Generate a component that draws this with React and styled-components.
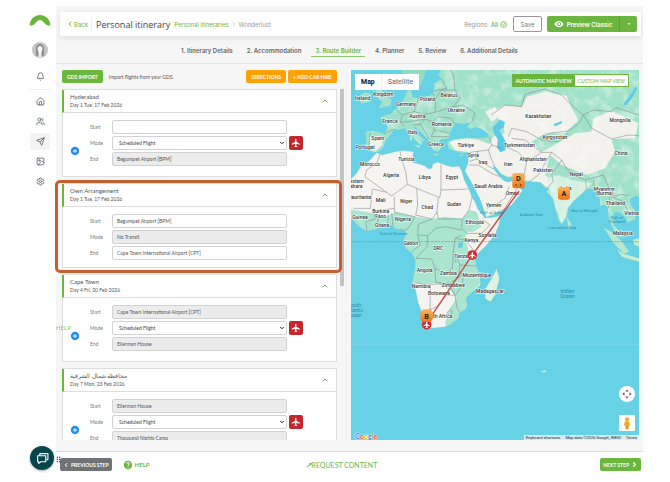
import React, { useState } from 'react';
import styled, { createGlobalStyle } from 'styled-components';
import {
 Bell,
 House,
 Users,
 Send,
 Image,
 Settings,
 ChevronLeft,
 ChevronRight,
 ChevronUp,
 ChevronDown,
} from 'lucide-react';
import {
 MdFlight,
 MdVisibility,
 MdAddCircle,
 MdHelp,
 MdArrowDropDown,
 MdDragIndicator,
} from 'react-icons/md';

const stops = [
 {
  id: 'hyderabad',
  title: 'Hyderabad',
  date: 'Day 1 Tue, 17 Feb 2026',
  start: '',
  mode: 'Scheduled Flight',
  end: 'Begumpet Airport [BPM]',
  lockEnd: true,
 },
 {
  id: 'own',
  title: 'Own Arrangement',
  date: 'Day 1 Tue, 17 Feb 2026',
  start: 'Begumpet Airport [BPM]',
  mode: 'No Transit',
  end: 'Cape Town International Airport [CPT]',
  noTransit: true,
 },
 {
  id: 'capetown',
  title: 'Cape Town',
  date: 'Day 4 Fri, 20 Feb 2026',
  start: 'Cape Town International Airport [CPT]',
  mode: 'Scheduled Flight',
  end: 'Ellerman House',
  lockStart: true,
  lockEnd: true,
 },
 {
  id: 'sharqiya',
  title: 'محافظة شمال الشرقية',
  date: 'Day 7 Mon, 23 Feb 2026',
  start: 'Ellerman House',
  mode: 'Scheduled Flight',
  end: 'Thousand Nights Camp',
  lockStart: true,
  lockEnd: true,
 },
];

const tabs = [
 '1. Itinerary Details',
 '2. Accommodation',
 '3. Route Builder',
 '4. Planner',
 '5. Review',
 '6. Additional Details',
];

const countries = [
 ['Ireland', 53, 105],
 ['Kingdom', 115, 92],
 ['Germany', 183, 122],
 ['Poland', 248, 107],
 ['Belarus', 312, 96],
 ['Ukraine', 334, 142],
 ['Austria', 217, 158],
 ['France', 135, 173],
 ['Romania', 290, 182],
 ['Italy', 203, 206],
 ['Spain', 98, 225],
 ['Portugal', 60, 252],
 ['Greece', 273, 242],
 ['Türkiye', 362, 246],
 ['Syria', 385, 277],
 ['Tunisia', 184, 287],
 ['Iraq', 414, 297],
 ['Morocco', 75, 304],
 ['Algeria', 138, 335],
 ['Libya', 239, 343],
 ['Egypt', 321, 343],
 ['Western', 29, 354],
 ['Sahara', 29, 369],
 ['Mauritania', 42, 403],
 ['Mali', 107, 411],
 ['Niger', 184, 414],
 ['Chad', 247, 432],
 ['Sudan', 327, 422],
 ['Saudi Arabia', 430, 369],
 ['Yemen', 446, 426],
 ['Burkina', 107, 444],
 ['Faso', 107, 459],
 ['Guinea', 45, 463],
 ['Ghana', 111, 485],
 ['Nigeria', 174, 469],
 ['Ethiopia', 389, 476],
 ['Somalia', 428, 516],
 ['Gabon', 197, 540],
 ['Kenya', 379, 532],
 ['DRC', 280, 555],
 ['Tanzania', 358, 580],
 ['Angola', 239, 622],
 ['Zambia', 310, 629],
 ['Mozambique', 396, 637],
 ['Namibia', 228, 670],
 ['Zimbabwe', 325, 667],
 ['Botswana', 282, 691],
 ['Madagascar', 435, 683],
 ['South Africa', 280, 758],
 ['Kazakhstan', 580, 158],
 ['Mongolia', 825, 172],
 ['Kyrgyzstan', 630, 222],
 ['Turkmenistan', 523, 245],
 ['China', 828, 271],
 ['Afghanistan', 564, 289],
 ['Iran', 490, 303],
 ['Pakistan', 594, 320],
 ['Nepal', 694, 333],
 ['India', 663, 374],
 ['Oman', 502, 391],
 ['Myanmar', 778, 377],
 ['(Burma)', 778, 391],
 ['Thailand', 811, 421],
 ['Vietnam', 866, 449],
 ['Malaysia', 833, 509],
];

const waters = [
 ['Arabian Sea', 558, 452],
 ['Bay of Bengal', 718, 442],
 ['Laccadive Sea', 652, 492],
 ['Gulf of Guinea', 145, 510],
 ['Gulf of', 815, 462],
 ['Thailand', 815, 474],
 ['Gulf of Aden', 440, 448],
];

const oceans = [
 ['Indian', 667, 683],
 ['Ocean', 667, 699],
 ['South', 29, 725],
 ['Atlantic', 29, 741],
 ['Ocean', 29, 757],
];

const africa =
 'M95 263 L112 270 L135 264 L165 257 L190 258 L206 261 L203 273 L210 283 L203 293 L222 297 L240 303 L250 312 L261 310 L264 296 L278 292 L300 300 L322 306 L342 304 L350 318 L358 345 L372 372 L381 398 L390 410 L398 432 L412 448 L418 459 L438 458 L466 453 L462 478 L450 508 L425 540 L402 562 L390 582 L392 603 L404 628 L406 660 L380 682 L361 699 L366 718 L362 732 L344 742 L340 758 L318 776 L298 786 L262 789 L240 786 L234 768 L232 745 L219 712 L213 680 L203 652 L210 615 L213 588 L203 566 L184 550 L174 530 L184 505 L175 492 L155 492 L135 478 L108 483 L90 493 L65 497 L45 486 L26 466 L10 455 L10 350 L35 325 L45 308 L70 290 Z';

const africaGreen =
 'M10 432 L60 440 L98 448 L130 452 L150 442 L210 455 L262 462 L300 455 L352 462 L372 435 L395 440 L420 470 L410 485 L385 500 L368 500 L360 520 L372 560 L390 582 L392 603 L404 628 L404 656 L380 682 L361 699 L366 718 L362 732 L344 742 L340 758 L318 776 L300 782 L305 755 L315 730 L335 700 L320 680 L292 660 L272 655 L216 655 L203 650 L210 615 L213 588 L203 566 L184 550 L174 530 L184 505 L175 492 L155 492 L135 478 L108 483 L90 493 L65 497 L45 486 L26 466 L10 455 Z';

const eurasia =
 'M62 200 L85 197 L118 206 L128 190 L124 172 L104 158 L122 150 L138 146 L152 132 L168 118 L178 100 L186 78 L198 72 L202 98 L222 100 L254 92 L268 78 L268 55 L290 42 L280 30 L290 10 L890 10 L890 398 L872 392 L854 403 L858 420 L872 440 L870 462 L848 472 L842 458 L826 444 L808 440 L802 455 L808 482 L826 500 L834 520 L818 512 L802 486 L792 462 L788 425 L776 418 L766 424 L764 400 L752 380 L738 372 L724 372 L704 392 L682 412 L668 430 L666 456 L650 476 L642 468 L632 435 L624 400 L604 380 L614 372 L598 366 L586 352 L552 350 L525 348 L508 342 L500 334 L488 338 L468 326 L452 305 L444 300 L446 312 L462 334 L474 346 L482 350 L492 352 L506 346 L514 362 L532 376 L518 398 L500 420 L474 436 L448 450 L424 456 L416 430 L404 400 L385 362 L366 328 L360 318 L369 298 L372 262 L350 264 L330 258 L312 252 L306 232 L330 222 L360 218 L392 220 L428 218 L432 208 L410 192 L392 186 L378 192 L366 186 L378 172 L352 178 L334 174 L324 186 L314 204 L310 222 L290 222 L282 228 L290 246 L278 260 L264 254 L256 238 L248 222 L232 206 L214 190 L206 184 L212 200 L228 216 L242 226 L232 228 L230 240 L220 234 L206 220 L190 204 L180 190 L160 194 L148 192 L136 210 L122 224 L116 246 L104 258 L84 262 L74 254 L60 252 L64 226 Z';

const beige = [
 'M440 140 L480 120 L530 125 L545 95 L600 80 L665 92 L680 130 L700 165 L660 205 L600 205 L560 230 L590 260 L620 245 L690 205 L740 200 L745 160 L800 138 L850 160 L880 175 L870 220 L800 222 L810 260 L780 310 L725 330 L650 300 L615 270 L600 330 L625 350 L608 368 L586 352 L508 342 L468 326 L440 296 L400 262 L430 245 L445 215 L480 205 L470 170 Z',
 'M312 230 L350 222 L400 224 L440 240 L445 300 L462 334 L492 352 L506 346 L532 376 L500 420 L424 456 L404 400 L360 318 L372 262 L330 256 Z',
 'M72 215 L112 212 L112 240 L92 258 L74 250 Z',
 'M420 140 L450 125 L470 150 L440 170 Z',
];

const borders = [
 // Africa
 'M105 268 L95 295 L65 315 L60 335 L125 382 L140 393 L187 358 L182 320 L172 290 L165 258',
 'M187 358 L215 370 L284 398 L288 375 L288 298 M288 375 L372 372 M215 370 L218 420 L212 450 L262 462 L276 440 L280 398',
 'M125 382 L82 372 L76 430 L25 430 M148 395 L148 430 L118 434 L98 452 L100 490 M148 430 L150 442 L210 455 L190 490 L178 496',
 'M82 430 L92 462 L62 470 L66 497 M130 448 L128 480 M140 444 L144 484 M276 440 L280 462 L352 462 L372 435 L381 398 M352 462 L350 490 L365 505 L410 505 L435 480 L415 465',
 'M262 462 L220 478 L218 510 L248 512 L272 490 L300 485 L350 495 M218 510 L226 540 L200 560 M248 512 L246 545 L213 580',
 'M213 580 L260 582 L270 610 L300 625 L322 610 L325 560 L330 520 L350 510 M330 520 L360 525 L390 560 M325 560 L345 600 L392 603',
 'M345 600 L340 640 L310 655 L272 652 L270 610 M205 654 L272 658 L310 655 L330 690 L302 692 L282 720 L255 735 L256 658 M256 730 L256 762 L236 765 M330 690 L336 730 L345 742 M340 640 L355 625 L352 660 L332 690 M306 742 L318 734 L322 744 L312 752 Z',
 // Europe
 'M118 206 L148 192 M75 204 L72 250 M152 132 L172 150 L166 172 L178 186 M166 172 L205 168 L240 162 L238 148 L208 140 L220 100 M172 150 L208 140 M238 148 L270 142 L272 100 L262 85',
 'M240 162 L262 170 L280 155 L318 160 L332 178 M262 170 L268 195 L312 204 M270 142 L325 125 L355 120 L390 145 L380 172 M272 100 L290 75 L330 75 L345 100 L325 125 M268 78 L305 70 L290 42',
 'M240 162 L226 178 L240 200 L252 222 M268 195 L258 215 L310 215 M226 178 L206 180 M330 75 L325 30 L318 15',
 // Middle East and central Asia
 'M432 215 L440 240 L430 255 L375 262 M398 258 L395 282 L372 290 M395 282 L420 298 L446 312 M372 300 L400 300 L440 325 L462 334 M430 255 L440 285 L448 302 M440 240 L470 250 M424 430 L450 420 L480 400 L492 365',
 'M438 150 L480 120 L530 125 L540 88 L600 72 L650 90 L690 130 L715 150 L700 178 L668 198 L612 205 L590 225 L545 200 L500 190 L490 215',
 'M482 245 L520 262 L545 290 L535 340 M545 290 L590 262 L620 262 L600 295 L580 330 L552 350 M620 262 L650 285 L620 330 L625 350 L605 370 M500 220 L540 225 L590 262 M590 225 L640 230 L668 205',
 'M715 150 L745 135 L800 140 L812 128 L850 140 L882 150 M715 150 L740 190 L800 222 L850 210 L882 212 M650 285 L665 312 L720 345 L775 330 L790 365 L800 395 L830 388 L850 392 M668 322 L710 342 M722 348 L724 372 M745 345 L750 375 M795 395 L790 430 M800 395 L835 410 L850 440',
];

const Route = () => {
 const [view, setView] = useState('Map');
 const [source, setSource] = useState('auto');

 return (
  <MapPanel>
   <MapSvg viewBox='18 15 864 1110' preserveAspectRatio='xMidYMid slice'>
    <defs>
     <linearGradient id='pin' x1='0' y1='0' x2='0' y2='1'>
      <stop offset='0' stopColor='#fdb45c' />
      <stop offset='1' stopColor='#ee7412' />
     </linearGradient>
     <clipPath id='asiaClip'>
      <path d={eurasia} />
     </clipPath>
     <filter id='relief' x='0' y='0' width='1' height='1'>
      <feTurbulence type='fractalNoise' baseFrequency='0.03' numOctaves='3' seed='4' />
      <feColorMatrix values='0 0 0 0 0.95  0 0 0 0 0.98  0 0 0 0 0.94  3 0 0 0 -1.3' />
     </filter>
    </defs>
    <rect x='0' y='0' width='900' height='1140' fill='#67d1e6' />
    <path d='M170 10 L176 40 L190 52 L205 42 L214 60 L228 58 L236 40 L246 10 Z' fill='#93dcc4' />
    <path d='M82 60 L100 52 L112 78 L140 105 L136 122 L100 130 L112 112 L98 100 L106 88 Z' fill='#a5e2cc' />
    <path d='M58 82 L78 86 L74 110 L48 116 L42 98 Z' fill='#a5e2cc' />
    <path d={eurasia} fill='#9fe1c9' />
    <g clipPath='url(#asiaClip)'>
     {beige.map((d) => (
      <path key={d} d={d} fill='#f3f1ec' />
     ))}
     <path d='M608 340 L640 330 L680 345 L740 355 L724 372 L682 412 L650 476 L620 400 Z' fill='#d4f0e0' />
     <rect x='30' y='10' width='860' height='500' filter='url(#relief)' opacity='0.4' />
    </g>
    <path d={africa} fill='#f6f4f1' />
    <path d={africaGreen} fill='#a9e5cf' />
    <path d='M395 440 L420 470 L466 453 L450 508 L402 562 L385 540 L368 510 L410 490 Z' fill='#f1f2ea' />
    <path d='M455 612 L463 640 L450 690 L436 710 L421 700 L420 672 L438 645 Z' fill='#dff2dd' />
    <path d='M664 456 L676 470 L680 484 L671 486 Z M776 488 L800 500 L830 528 L852 560 L836 566 L806 534 Z' fill='#b6e8cf' />
    <path d='M815 552 L835 566 L882 580 L882 590 L832 576 Z M864 524 L882 520 L882 545 L868 540 Z' fill='#c9ecc9' />
    <path d='M196 210 L202 212 L200 228 L194 226 Z M208 240 L226 240 L222 250 Z M264 266 L284 268 L268 272 Z M342 270 L356 266 L348 274 Z' fill='#b7e6cf' />
    <path d='M588 918 L602 916 L604 922 L592 922 Z' fill='#c9ecd8' />
    {/* inland water */}
    <path
     d='M444 186 L466 164 L480 172 L476 188 L462 194 L474 214 L486 238 L480 256 L466 262 L456 248 L458 222 L446 204 Z M625 178 L650 168 L652 174 L630 184 Z M835 118 L862 82 L872 64 L876 70 L866 92 L842 122 Z M340 535 L354 532 L352 548 L340 548 Z M328 565 L334 590 L330 592 Z'
     fill='#5ecbe4'
    />
    <path d={africa} fill='none' stroke='#9bcfc9' strokeWidth='1' />
    {borders.map((d) => (
     <path key={d} d={d} fill='none' stroke='#7c8584' strokeWidth='1.6' strokeLinejoin='round' />
    ))}
    <path d='M18 530 H882' stroke='#4d9fb2' strokeWidth='2' strokeDasharray='7 3' />
    <path d='M18 838 H882' stroke='#7fd9eb' strokeWidth='2' />

    <Country>
     {countries.map(([name, x, y]) => (
      <text key={name} x={x} y={y}>
       {name}
      </text>
     ))}
    </Country>
    <Water>
     {waters.map(([name, x, y]) => (
      <text key={name + y} x={x} y={y}>
       {name}
      </text>
     ))}
     {oceans.map(([name, x, y]) => (
      <text key={name + y} x={x} y={y} className='ocean'>
       {name}
      </text>
     ))}
    </Water>

    <path d='M522 378 L382 570 L256 758' fill='none' stroke='#c8484b' strokeWidth='4' />
    <path d='M516 372 L432 505' fill='none' stroke='#a07077' strokeWidth='2' />
    <Plane x={382} y={570} />
    <Plane x={245} y={779} />
    <Pin>
     <rect x='502' y='324' width='37' height='46' rx='8' />
     <circle cx='513' cy='360' r='2' className='dot' />
     <circle cx='527' cy='360' r='2' className='dot' />
     <text x='520' y='349'>D</text>
     <rect x='639' y='366' width='36' height='38' rx='7' />
     <text x='657' y='393'>A</text>
     <rect x='226' y='733' width='38' height='38' rx='14' />
     <text x='245' y='761'>B</text>
    </Pin>
   </MapSvg>

   <MapTypes>
    {['Map', 'Satellite'].map((name) => (
     <MapType key={name} $active={view === name} onClick={() => setView(name)}>
      {name}
     </MapType>
    ))}
   </MapTypes>
   <ViewSwitch>
    <ViewButton $active={source === 'auto'} onClick={() => setSource('auto')}>
     AUTOMATIC MAP VIEW
    </ViewButton>
    <ViewButton $active={source === 'custom'} onClick={() => setSource('custom')}>
     CUSTOM MAP VIEW
    </ViewButton>
   </ViewSwitch>
   <MapTools>
    <RoundTool aria-label='Map camera controls'>
     <svg viewBox='0 0 24 24' width='10' height='10' fill='#555'>
      <path d='M12 1 L16 6 H8 Z M12 23 L16 18 H8 Z M1 12 L6 8 V16 Z M23 12 L18 8 V16 Z' />
     </svg>
    </RoundTool>
    <SquareTool aria-label='Street View'>
     <svg viewBox='0 0 20 34' width='8' height='13'>
      <circle cx='10' cy='6' r='5.5' fill='#f2ac28' />
      <path d='M4 12 H16 L18 22 H15 L14 32 H6 L5 22 H2 Z' fill='#f2ac28' />
      <path d='M7 12 L10 16 L13 12 M10 22 V32' stroke='#b5791a' strokeWidth='1.5' fill='none' />
     </svg>
    </SquareTool>
   </MapTools>
   <GoogleMark aria-label='Google'>
    <span>G</span>
    <span>o</span>
    <span>o</span>
    <span>g</span>
    <span>l</span>
    <span>e</span>
   </GoogleMark>
   <Attribution>
    <span>Keyboard shortcuts</span>
    <span>Map data ©2026 Google, INEGI</span>
    <a href='#terms'>Terms</a>
   </Attribution>
  </MapPanel>
 );
};

const Plane = ({ x, y }) => (
 <g transform={`translate(${x} ${y})`}>
  <circle r='14.5' fill='#cf2a2f' />
  <path
   d='M0 -10 L2 -7 V-2 L10 3 V5 L2 3 V7 L4 9 V10 L0 9 L-4 10 V9 L-2 7 V3 L-10 5 V3 L-2 -2 V-7 Z'
   fill='#fff'
  />
 </g>
);

const StopCard = ({ stop }) => {
 return (
  <Card $marked={stop.noTransit}>
   <CardHead>
    <div>
     <h3>{stop.title}</h3>
     <p>{stop.date}</p>
    </div>
    <IconButton aria-label={`Collapse ${stop.title}`}>
     <ChevronUp size={8} strokeWidth={3} />
    </IconButton>
   </CardHead>
   <CardBody $tight={stop.noTransit}>
    <AddCell>
     {!stop.noTransit && (
      <AddButton aria-label='Add transit'>
       <MdAddCircle size={10} />
      </AddButton>
     )}
    </AddCell>
    <Fields>
     <Field>
      <label htmlFor={`${stop.id}-start`}>Start</label>
      <Input id={`${stop.id}-start`} defaultValue={stop.start} readOnly={stop.lockStart} />
     </Field>
     <Field>
      <label htmlFor={`${stop.id}-mode`}>Mode</label>
      {stop.noTransit ? (
       <Input id={`${stop.id}-mode`} defaultValue={stop.mode} readOnly />
      ) : (
       <SelectWrap>
        <Select id={`${stop.id}-mode`} defaultValue={stop.mode}>
         <option>{stop.mode}</option>
        </Select>
        <ChevronDown size={6} strokeWidth={4} />
       </SelectWrap>
      )}
      {!stop.noTransit && (
       <FlightButton aria-label='Flight details'>
        <MdFlight size={10} />
       </FlightButton>
      )}
     </Field>
     <Field>
      <label htmlFor={`${stop.id}-end`}>End</label>
      <Input id={`${stop.id}-end`} defaultValue={stop.end} readOnly={stop.lockEnd} />
     </Field>
    </Fields>
   </CardBody>
  </Card>
 );
};

export default function App() {
 const [active, setActive] = useState(2);

 return (
  <>
   <GlobalStyle />
   <Page>
    <Sidebar>
     <svg width='22' height='12' viewBox='0 0 22 12' aria-label='Logo'>
      <path
       d='M0.5 11.5 A10.5 10.5 0 0 1 21.5 11.5 C18 11.5 17 11 15 8.5 C12.5 5 9.5 5 7 8.5 C5 11 4 11.5 0.5 11.5 Z'
       fill='#6bb63f'
      />
     </svg>
     <Avatar viewBox='0 0 32 32'>
      <circle cx='16' cy='16' r='16' fill='#c4c4c4' />
      <path d='M8 27 V13 C8 1 24 1 24 13 V27 C20 30 12 30 8 27 Z' fill='#8b8b8b' />
      <path d='M11 13 C11 6 21 6 21 13 C21 18 19 21 16 21 C13 21 11 18 11 13 Z' fill='#f5f5f5' />
      <path d='M13 20 H19 V31 H13 Z' fill='#f0f0f0' />
     </Avatar>
     <NavLink href='#alerts' aria-label='Notifications'>
      <Bell size={9} />
     </NavLink>
     <Divider />
     <NavList>
      <NavLink href='#home' aria-label='Home'>
       <House size={9} />
      </NavLink>
      <NavLink href='#contacts' aria-label='Contacts'>
       <Users size={9} />
      </NavLink>
      <NavLink href='#itineraries' aria-label='Itineraries' $active>
       <Send size={9} />
      </NavLink>
      <NavLink href='#media' aria-label='Media'>
       <Image size={9} />
      </NavLink>
      <NavLink href='#settings' aria-label='Settings'>
       <Settings size={9} />
      </NavLink>
     </NavList>
    </Sidebar>

    <Main>
     <Header>
      <Back href='#back'>
       <ChevronLeft size={8} strokeWidth={3} />
       Back
      </Back>
      <h1>Personal itinerary</h1>
      <Crumbs>
       <a href='#itineraries'>Personal itineraries</a>
       <ChevronRight size={6} />
       <span>Wonderlust</span>
      </Crumbs>
      <Regions>
       Regions: <b>All</b>
       <svg width='7' height='7' viewBox='0 0 12 12' fill='none' stroke='#6bb63f' strokeWidth='1.4'>
        <circle cx='6' cy='6' r='5' />
        <path d='M4 6 L6 8 L8 4' />
       </svg>
      </Regions>
      <SaveButton>Save</SaveButton>
      <Preview>
       <button>
        <MdVisibility size={10} />
        Preview Classic
       </button>
       <button aria-label='More previews'>
        <MdArrowDropDown size={8} />
       </button>
      </Preview>
     </Header>

     <Tabs>
      {tabs.map((name, i) => (
       <Tab key={name} $active={active === i} onClick={() => setActive(i)}>
        {name}
       </Tab>
      ))}
     </Tabs>

     <Builder>
      <Column>
       <Toolbar>
        <Button $bg='#6bb63f'>GDS IMPORT</Button>
        <p>Import flights from your GDS.</p>
        <Button $bg='#fca207'>DIRECTIONS</Button>
        <Button $bg='#fca207'>+ ADD CAR HIRE</Button>
       </Toolbar>
       <Scroller>
        <List>
         {stops.map((stop) => (
          <StopCard key={stop.id} stop={stop} />
         ))}
        </List>
        <Scrollbar />
       </Scroller>
      </Column>
      <Route />
     </Builder>
    </Main>
    <Footer>
     <FooterStart>
      <StepButton $bg='#707375'>
       <ChevronLeft size={6} strokeWidth={4} />
       PREVIOUS STEP
      </StepButton>
      <FooterLink href='#help'>
       <MdHelp size={10} />
       HELP
      </FooterLink>
     </FooterStart>
     <Request href='#request'>
      <svg width='6' height='6' viewBox='0 0 12 12' stroke='#6bb63f' strokeWidth='2' fill='none'>
       <path d='M1 10 L10 4 M7 3 L11 3 L9 7' />
      </svg>
      REQUEST CONTENT
     </Request>
     <StepButton $bg='#6bb63f'>
      NEXT STEP
      <ChevronRight size={7} strokeWidth={4} />
     </StepButton>
    </Footer>
    <HelpTag href='#help'>HELP</HelpTag>
    <Grip>
     <MdDragIndicator size={9} />
    </Grip>
    <Chat aria-label='Open chat'>
     <svg width='13' height='13' viewBox='0 0 24 24' fill='none' stroke='#fff' strokeWidth='2' strokeLinejoin='round'>
      <path d='M7 7 V3 H22 V14 H19' />
      <path d='M3 7 H18 V18 H9 L5 21 V18 H3 Z' />
     </svg>
    </Chat>
   </Page>
  </>
 );
}

const GlobalStyle = createGlobalStyle`
 * {
  box-sizing: border-box;
 }
 body {
  margin: 0;
  background: #fff;
  color: #555;
  font-family: Lato, 'Liberation Sans', sans-serif;
  font-size: 5px;
 }
 h1, h3, p {
  margin: 0;
 }
 a {
  text-decoration: none;
 }
 button {
  font-family: inherit;
  border: none;
  padding: 0;
  cursor: pointer;
 }
 svg {
  flex-shrink: 0;
 }
`;

const Page = styled.div`
 display: grid;
 grid-template-columns: 56px minmax(0, 1fr);
 grid-template-rows: minmax(0, 1fr) 30px;
 height: 100vh;
 padding: 6px 27px 0 0;
`;

const Sidebar = styled.nav`
 display: flex;
 flex-direction: column;
 align-items: center;
 padding: 8px 6px 0 30px;
`;

const Avatar = styled.svg`
 width: 16px;
 height: 16px;
 margin: 16px 0 10px;
`;

const Divider = styled.hr`
 width: 100%;
 margin: 4px 0 3px;
 border: none;
 border-top: 1px solid #eee;
`;

const NavList = styled.div`
 display: flex;
 flex-direction: column;
 gap: 3px;
`;

const NavLink = styled.a`
 display: flex;
 align-items: center;
 justify-content: center;
 width: 20px;
 height: 17px;
 border-radius: 2px;
 color: #4f545c;
 background: ${({ $active }) => ($active ? '#f3f3f3' : 'transparent')};
`;

const Main = styled.main`
 display: flex;
 flex-direction: column;
 background: #f6f6f6;
 border-bottom: 1px solid #ddd;
`;

const Header = styled.header`
 display: flex;
 align-items: center;
 height: 24px;
 margin: 6px 2px 0 4px;
 padding: 0 4px 0 6px;
 background: #fff;
 border-radius: 2px;
 box-shadow: 0 2px 6px rgba(0, 0, 0, 0.1);
 font-family: Inter, sans-serif;
 font-size: 6px;
 white-space: nowrap;
 h1 {
  padding: 0 4px;
  border-left: 1px solid #eee;
  font-family: 'Open Sans', sans-serif;
  font-weight: 400;
  font-size: 9px;
  color: #444;
 }
`;

const Back = styled.a`
 display: flex;
 align-items: center;
 margin-right: 3px;
 color: #6bb63f;
`;

const Crumbs = styled.div`
 display: flex;
 align-items: center;
 gap: 2px;
 color: #999;
 a {
  color: #6bb63f;
 }
`;

const Regions = styled.div`
 display: flex;
 align-items: center;
 gap: 2px;
 margin: 0 6px 0 auto;
 color: #999;
 b {
  font-weight: 500;
  color: #6bb63f;
 }
`;

const SaveButton = styled.button`
 width: 29px;
 height: 16px;
 margin-right: 5px;
 border: 1px solid #999;
 border-radius: 2px;
 background: #fff;
 font-size: 6px;
 color: #777;
`;

const Preview = styled.div`
 display: flex;
 height: 16px;
 border-radius: 2px;
 overflow: hidden;
 button {
  display: flex;
  align-items: center;
  justify-content: center;
  gap: 3px;
  width: 72px;
  background: #6bb63f;
  font-size: 6px;
  font-weight: 600;
  color: #fff;
 }
 button + button {
  width: 18px;
  border-left: 1px solid #5aa52f;
 }
`;

const Tabs = styled.div`
 display: flex;
 justify-content: center;
 gap: 6px;
 height: 28px;
 padding: 8px 0 6px;
 border-bottom: 1px solid #e4e4e4;
`;

const Tab = styled.button`
 padding: 0 4px;
 background: none;
 border-bottom: 1px solid ${({ $active }) => ($active ? '#8cc96a' : 'transparent')};
 font-family: Inter, sans-serif;
 font-size: 6px;
 font-weight: 600;
 white-space: nowrap;
 color: ${({ $active }) => ($active ? '#6bb63f' : '#666')};
`;

const Builder = styled.div`
 display: grid;
 grid-template-columns: 94fr 96fr;
 grid-template-rows: minmax(0, 1fr);
 gap: 7px;
 flex: 1;
 min-height: 0;
 padding: 6px 4px 11px 6px;
`;

const Column = styled.section`
 display: flex;
 flex-direction: column;
 gap: 6px;
 min-height: 0;
`;

const Toolbar = styled.div`
 display: flex;
 align-items: center;
 gap: 2px;
 padding-right: 7px;
 p {
  margin: 0 auto 0 4px;
 }
`;

const Button = styled.button`
 display: flex;
 align-items: center;
 justify-content: center;
 gap: 2px;
 height: 13px;
 padding: 0 5px;
 border-radius: 2px;
 background: ${({ $bg }) => $bg};
 font-size: 5px;
 font-weight: 700;
 white-space: nowrap;
 color: #fff;
`;

const StepButton = styled(Button)`
 padding: 0 3px;
`;

const Scroller = styled.div`
 display: flex;
 flex: 1;
 gap: 3px;
 min-height: 0;
`;

/* the extra padding leaves room for the outline round a marked card */
const List = styled.div`
 display: flex;
 flex-direction: column;
 gap: 6px;
 flex: 1;
 margin: 0 -8px;
 padding: 0 8px;
 overflow: hidden;
 z-index: 1;
`;

const Scrollbar = styled.div`
 width: 4px;
 height: 56%;
 background: #c3c3c3;
`;

const Card = styled.article`
 position: relative;
 flex-shrink: 0;
 border: 1px solid #ddd;
 border-left: none;
 background: #fff;
 box-shadow: inset 1px 0 #ddd;
 &::after {
  content: '';
  display: ${({ $marked }) => ($marked ? 'block' : 'none')};
  position: absolute;
  inset: -4px -6px -6px -7px;
  border: 3px solid #c2602f;
  border-radius: 5px;
  pointer-events: none;
 }
`;

const CardHead = styled.div`
 display: flex;
 align-items: center;
 justify-content: space-between;
 height: 23px;
 padding: 0 7px 0 6px;
 border-left: 2px solid #6bb63f;
 border-bottom: 1px solid #ddd;
 h3 {
  font-size: 6px;
  line-height: 8px;
  font-weight: 400;
 }
 p {
  font-size: 5px;
  line-height: 8px;
 }
`;

const IconButton = styled.button`
 display: flex;
 background: none;
 color: #6bb63f;
`;

const CardBody = styled.div`
 display: flex;
 padding: 7px 35px ${({ $tight }) => ($tight ? '7px' : '10px')} 8px;
`;

const AddCell = styled.div`
 display: flex;
 align-items: flex-end;
 width: 20px;
 padding-bottom: 10px;
`;

const AddButton = styled.button`
 display: flex;
 background: none;
 color: #1e8fe8;
`;

const Fields = styled.div`
 display: flex;
 flex-direction: column;
 gap: 2px;
 flex: 1;
`;

const Field = styled.div`
 display: grid;
 grid-template-columns: 22px minmax(0, 1fr) 14px;
 align-items: center;
 height: 14px;
 label {
  color: #777;
 }
`;

const Input = styled.input`
 width: 100%;
 height: 14px;
 padding: 0 4px;
 border: 1px solid #d2d2d2;
 border-radius: 2px;
 background: #fff;
 font-family: inherit;
 font-size: 5px;
 color: #555;
 &:read-only {
  background: #ececec;
 }
`;

const SelectWrap = styled.div`
 position: relative;
 svg {
  position: absolute;
  right: 2px;
  top: 4px;
  color: #222;
  pointer-events: none;
 }
`;

const Select = styled.select`
 display: block;
 appearance: none;
 width: 100%;
 height: 14px;
 padding: 0 6px;
 border: 1px solid #d2d2d2;
 border-radius: 2px;
 background: #fff;
 font-family: inherit;
 font-size: 5px;
 color: #444;
`;

const FlightButton = styled.button`
 display: flex;
 align-items: center;
 justify-content: center;
 width: 14px;
 height: 14px;
 margin-left: 2px;
 border-radius: 2px;
 background: #c4262b;
 color: #fff;
`;

const MapPanel = styled.section`
 position: relative;
 min-height: 0;
 overflow: hidden;
 font-family: Roboto, sans-serif;
`;

const MapSvg = styled.svg`
 display: block;
 width: 100%;
 height: 100%;
`;

const Country = styled.g`
 font-size: 15px;
 font-weight: 500;
 text-anchor: middle;
 fill: #333;
 stroke: #fff;
 stroke-width: 3px;
 paint-order: stroke;
`;

const Water = styled.g`
 font-size: 13px;
 text-anchor: middle;
 fill: #2a8fae;
 .ocean {
  font-size: 15px;
 }
`;

const Pin = styled.g`
 fill: url(#pin);
 font-size: 22px;
 font-weight: 700;
 text-anchor: middle;
 text, .dot {
  fill: #222;
 }
`;

const MapTypes = styled.div`
 position: absolute;
 top: 4px;
 left: 4px;
 display: flex;
 height: 16px;
 background: #fff;
`;

const MapType = styled.button`
 padding: 0 6px;
 background: none;
 font-size: 7px;
 font-weight: ${({ $active }) => ($active ? 700 : 400)};
 color: ${({ $active }) => ($active ? '#111' : '#666')};
 & + & {
  border-left: 1px solid #eee;
 }
`;

const ViewSwitch = styled.div`
 position: absolute;
 top: 4px;
 right: 10px;
 display: flex;
 border: 1px solid #6bb63f;
`;

const ViewButton = styled.button`
 height: 11px;
 padding: 0 3px;
 background: ${({ $active }) => ($active ? '#6bb63f' : '#fff')};
 font-family: Lato, sans-serif;
 font-size: 5px;
 font-weight: ${({ $active }) => ($active ? 700 : 400)};
 color: ${({ $active }) => ($active ? '#fff' : '#6bb63f')};
`;

const MapTools = styled.div`
 position: absolute;
 right: 4px;
 bottom: 9px;
 display: flex;
 flex-direction: column;
 gap: 13px;
`;

const RoundTool = styled.button`
 display: flex;
 align-items: center;
 justify-content: center;
 width: 16px;
 height: 16px;
 border-radius: 50%;
 background: #fff;
`;

const SquareTool = styled(RoundTool)`
 border-radius: 1px;
`;

const GoogleMark = styled.div`
 position: absolute;
 left: 4px;
 bottom: 0;
 font-family: Lato, sans-serif;
 font-size: 7px;
 font-weight: 700;
 color: #4285f4;
 text-shadow: 0 0 1px #fff, 0 0 1px #fff, 0 0 2px #fff;
 span:nth-child(2), span:nth-child(6) {
  color: #ea4335;
 }
 span:nth-child(3) {
  color: #fbbc05;
 }
 span:nth-child(5) {
  color: #34a853;
 }
`;

const Attribution = styled.div`
 position: absolute;
 right: 0;
 bottom: 0;
 display: flex;
 gap: 5px;
 padding: 0 2px;
 background: rgba(245, 245, 245, 0.8);
 font-size: 4px;
 line-height: 5px;
 color: #222;
 a {
  color: inherit;
 }
`;

const Footer = styled.footer`
 grid-column: 2;
 display: grid;
 grid-template-columns: 5fr 6fr auto;
 align-items: start;
 padding: 6px 2px 0 4px;
`;

const FooterStart = styled.div`
 display: flex;
 gap: 11px;
`;

const FooterLink = styled.a`
 display: flex;
 align-items: center;
 gap: 2px;
 height: 13px;
 font-size: 6px;
 font-weight: 700;
 color: #6bb63f;
`;

const Request = styled(FooterLink)`
 gap: 0;
 font-size: 7px;
 font-weight: 400;
`;

const HelpTag = styled.a`
 position: fixed;
 left: 56px;
 top: 323px;
 z-index: 2;
 font-size: 6px;
 line-height: 9px;
 color: #8cc96a;
`;

const Chat = styled.button`
 position: fixed;
 left: 30px;
 bottom: 12px;
 z-index: 2;
 display: flex;
 align-items: center;
 justify-content: center;
 width: 24px;
 height: 24px;
 border-radius: 50%;
 background: #07454d;
 box-shadow: 0 1px 3px rgba(0, 0, 0, 0.3);
`;

const Grip = styled.div`
 position: fixed;
 left: 54px;
 bottom: 18px;
 display: flex;
 color: #444;
`;
